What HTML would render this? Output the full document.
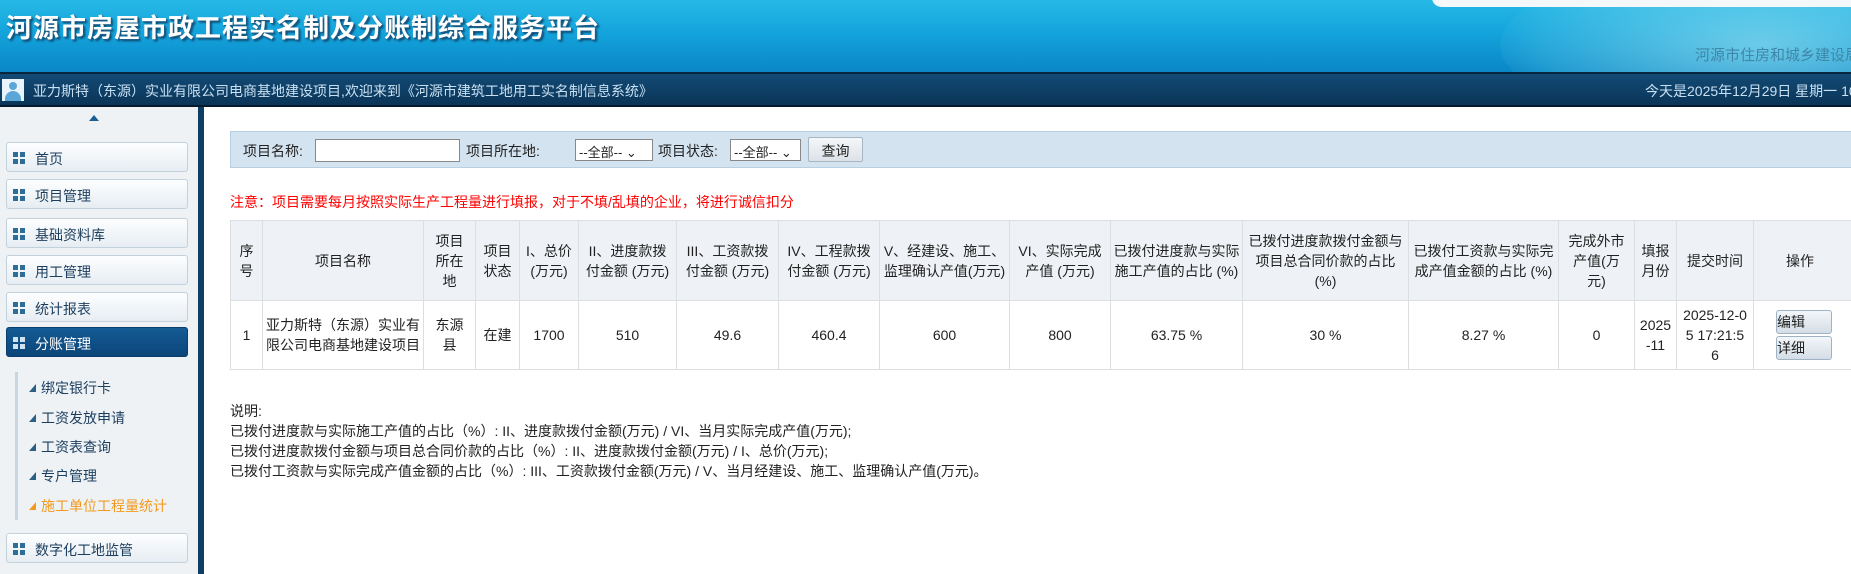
<!DOCTYPE html>
<html><head><meta charset="utf-8"><style>
*{margin:0;padding:0;box-sizing:border-box}
body{width:1851px;height:574px;overflow:hidden;position:relative;background:#fff;font-family:"Liberation Sans","Noto Sans CJK SC",sans-serif;font-size:13px;color:#222}
#hd{position:absolute;left:0;top:0;width:1851px;height:72px;background:linear-gradient(180deg,#27b9e6 0%,#14a4dc 45%,#0a86c6 100%);overflow:hidden}
#hd .map{position:absolute;left:1500px;top:-40px;width:520px;height:170px;border-radius:50%;background:radial-gradient(ellipse at center,rgba(170,235,245,.6),rgba(90,200,230,.3) 60%,rgba(40,170,220,0) 75%)}
#hd h1{position:absolute;left:6px;top:8px;font-size:26px;font-weight:bold;color:#fff;letter-spacing:1px;text-shadow:1px 1px 0 #1d5f8a,2px 2px 2px #0d3d5f;font-family:"Noto Sans CJK SC",sans-serif}
#hd .sub{position:absolute;left:1695px;top:44px;font-size:15px;color:#3d87a8;white-space:nowrap}
#hd .pill{position:absolute;left:1432px;top:-12px;width:440px;height:19px;background:#f4f8fa;border-radius:10px}
#nav{position:absolute;left:0;top:72px;width:1851px;height:35px;background:linear-gradient(180deg,#134a75,#0a3558);border-top:2px solid #06263f;border-bottom:2px solid #041a2c}
#nav .av{position:absolute;left:2px;top:5px;width:22px;height:22px;background:#e8f3fb}
#nav .av:before{content:"";position:absolute;left:7px;top:3px;width:8px;height:8px;border-radius:50%;background:#5ba6d8}
#nav .av:after{content:"";position:absolute;left:3px;top:12px;width:16px;height:10px;border-radius:8px 8px 0 0;background:#5ba6d8}
#nav .t{position:absolute;left:33px;top:7px;font-size:14px;color:#c9e0f2}
#nav .d{position:absolute;left:1645px;top:7px;font-size:14px;color:#c9e0f2;white-space:nowrap}
#sb{position:absolute;left:0;top:107px;width:198px;height:467px;background:#eef2f5}
#sbline{position:absolute;left:198px;top:107px;width:6px;height:467px;background:#0e3e63}
.arr{position:absolute;left:89px;top:115px;width:0;height:0;border-left:5px solid transparent;border-right:5px solid transparent;border-bottom:6px solid #1a5e94}
.it{position:absolute;left:6px;width:182px;height:30px;border:1px solid #c3d1dc;border-radius:3px;background:linear-gradient(180deg,#fdfeff,#e6edf2);font-size:14px;color:#1c3e5e;padding:6px 0 0 28px}
.it i{position:absolute;left:6px;top:9px;width:12px;height:12px;background:linear-gradient(#2d6d98,#2d6d98) 0 0/5px 5px no-repeat,linear-gradient(#2d6d98,#2d6d98) 7px 0/5px 5px no-repeat,linear-gradient(#2d6d98,#2d6d98) 0 7px/5px 5px no-repeat,linear-gradient(#2d6d98,#2d6d98) 7px 7px/5px 5px no-repeat}
.it.on{background:linear-gradient(180deg,#145b95,#0b4579);border-color:#0a3f6d;color:#fff}
.it.on i{background:linear-gradient(#cfe2f2,#cfe2f2) 0 0/5px 5px no-repeat,linear-gradient(#cfe2f2,#cfe2f2) 7px 0/5px 5px no-repeat,linear-gradient(#cfe2f2,#cfe2f2) 0 7px/5px 5px no-repeat,linear-gradient(#cfe2f2,#cfe2f2) 7px 7px/5px 5px no-repeat}
.vl{position:absolute;left:15px;top:372px;width:3px;height:148px;background:#c8d6df}
.si{position:absolute;left:29px;font-size:14px;color:#1c3e5e;padding-left:12px}
.si:before{content:"";position:absolute;left:0;top:6px;border-left:7px solid transparent;border-bottom:8px solid #2a5f86}
.si.o{color:#f39a1e}.si.o:before{border-bottom-color:#f39a1e}
#sr{position:absolute;left:230px;top:131px;width:1640px;height:37px;background:#d3e3f0;border:1px solid #b9d0e2;font-size:14px}
#sr span{position:absolute;top:9px}
#sr .in{position:absolute;top:7px;height:23px;background:#fff;border:1px solid #888}
#sr .sel{position:absolute;top:7px;height:22px;background:#fff;border:1px solid #888;font-size:13px;padding:2px 3px}
#sr .btn{position:absolute;left:577px;top:5px;width:55px;height:25px;border:1px solid #a8b6c3;background:linear-gradient(#f5f7f9,#dbe2e8);font-size:14px;text-align:center;padding-top:3px;border-radius:2px}
.note{position:absolute;left:230px;top:192px;color:#f00;font-size:14px}
table{position:absolute;left:230px;top:220px;border-collapse:collapse;table-layout:fixed;width:1650px}
td{border:1px solid #dcdfe2;text-align:center;font-size:14px;line-height:20px;color:#222;padding:0 2px;overflow:hidden}
tr.h td{background:#eef2f6;height:80px}
tr.r td{height:69px;background:#fff}
.bt{display:block;width:56px;height:24px;margin:2px 0 2px 20px;border:1px solid #9fb3c5;border-radius:3px;background:linear-gradient(#f3f6f9,#d4dde6);font-size:14px;line-height:22px}
.ex{position:absolute;left:230px;top:401px;font-size:14px;line-height:20px;color:#222;white-space:nowrap}
</style></head><body>
<div id="hd"><div class="map"></div><div class="pill"></div><h1>河源市房屋市政工程实名制及分账制综合服务平台</h1><div class="sub">河源市住房和城乡建设局</div></div>
<div id="nav"><div class="av"></div><div class="t">亚力斯特（东源）实业有限公司电商基地建设项目,欢迎来到《河源市建筑工地用工实名制信息系统》</div><div class="d">今天是2025年12月29日 星期一 10:25</div></div>
<div id="sb"></div><div id="sbline"></div>
<div class="arr"></div>
<div class="it" style="top:142px"><i></i>首页</div>
<div class="it" style="top:179px"><i></i>项目管理</div>
<div class="it" style="top:218px"><i></i>基础资料库</div>
<div class="it" style="top:255px"><i></i>用工管理</div>
<div class="it" style="top:292px"><i></i>统计报表</div>
<div class="it on" style="top:327px"><i></i>分账管理</div>
<div class="vl"></div>
<div class="si" style="top:378px">绑定银行卡</div>
<div class="si" style="top:408px">工资发放申请</div>
<div class="si" style="top:437px">工资表查询</div>
<div class="si" style="top:466px">专户管理</div>
<div class="si o" style="top:496px">施工单位工程量统计</div>
<div class="it" style="top:533px"><i></i>数字化工地监管</div>
<div id="sr">
<span style="left:12px">项目名称:</span><div class="in" style="left:84px;width:145px"></div>
<span style="left:235px">项目所在地:</span><div class="sel" style="left:344px;width:78px">--全部-- ⌄</div>
<span style="left:427px">项目状态:</span><div class="sel" style="left:499px;width:71px">--全部-- ⌄</div>
<div class="btn">查询</div></div>
<div class="note">注意：项目需要每月按照实际生产工程量进行填报，对于不填/乱填的企业，将进行诚信扣分</div>
<table>
<colgroup><col style="width:32px"><col style="width:161px"><col style="width:52px"><col style="width:44px"><col style="width:59px"><col style="width:98px"><col style="width:102px"><col style="width:101px"><col style="width:130px"><col style="width:101px"><col style="width:132px"><col style="width:166px"><col style="width:150px"><col style="width:76px"><col style="width:42px"><col style="width:77px"><col style="width:127px"></colgroup>
<tr class="h"><td>序<br>号</td><td>项目名称</td><td>项目<br>所在<br>地</td><td>项目<br>状态</td><td>I、总价<br>(万元)</td><td>II、进度款拨<br>付金额 (万元)</td><td>III、工资款拨<br>付金额 (万元)</td><td>IV、工程款拨<br>付金额 (万元)</td><td>V、经建设、施工、<br>监理确认产值(万元)</td><td>VI、实际完成<br>产值 (万元)</td><td>已拨付进度款与实际<br>施工产值的占比 (%)</td><td>已拨付进度款拨付金额与<br>项目总合同价款的占比<br>(%)</td><td>已拨付工资款与实际完<br>成产值金额的占比 (%)</td><td>完成外市<br>产值(万<br>元)</td><td>填报<br>月份</td><td>提交时间</td><td style="text-align:left;padding-left:32px">操作</td></tr>
<tr class="r"><td>1</td><td>亚力斯特（东源）实业有<br>限公司电商基地建设项目</td><td>东源<br>县</td><td>在建</td><td>1700</td><td>510</td><td>49.6</td><td>460.4</td><td>600</td><td>800</td><td>63.75 %</td><td>30 %</td><td>8.27 %</td><td>0</td><td>2025<br>-11</td><td>2025-12-0<br>5 17:21:5<br>6</td><td style="text-align:left"><span class="bt">编辑</span><span class="bt">详细</span></td></tr>
</table>
<div class="ex">说明:<br>已拨付进度款与实际施工产值的占比（%）: II、进度款拨付金额(万元) / VI、当月实际完成产值(万元);<br>已拨付进度款拨付金额与项目总合同价款的占比（%）: II、进度款拨付金额(万元) / I、总价(万元);<br>已拨付工资款与实际完成产值金额的占比（%）: III、工资款拨付金额(万元) / V、当月经建设、施工、监理确认产值(万元)。</div>
</body></html>
